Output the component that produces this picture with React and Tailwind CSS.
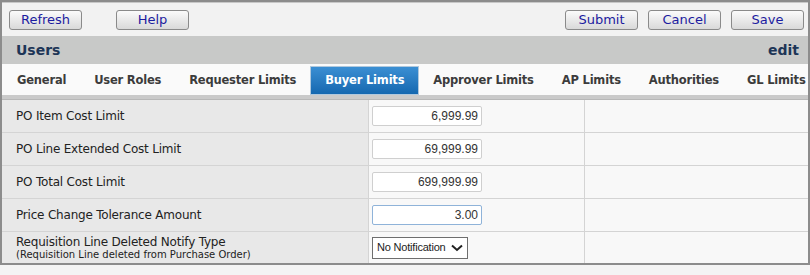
const tabs = [
  'General',
  'User Roles',
  'Requester Limits',
  'Buyer Limits',
  'Approver Limits',
  'AP Limits',
  'Authorities',
  'GL Limits',
];

const rows = [
  { label: 'PO Item Cost Limit', value: '6,999.99' },
  { label: 'PO Line Extended Cost Limit', value: '69,999.99' },
  { label: 'PO Total Cost Limit', value: '699,999.99' },
  { label: 'Price Change Tolerance Amount', value: '3.00', focus: true },
];

function Btn({ children }) {
  return (
    <button className="h-[20px] w-[73px] rounded-[3px] border border-[#8a8a8a] bg-gradient-to-b from-[#fbfbfb] to-[#d9d9d9] text-[13px] leading-none text-[#1c1ca0]">
      {children}
    </button>
  );
}

function NumInput({ value, focus }) {
  return (
    <input
      readOnly
      value={value}
      className={
        'h-[20px] w-[110px] rounded-[2px] border bg-white px-[3px] text-right text-[12px] text-[#333] outline-none [font-family:"Liberation_Sans",Arial,sans-serif] ' +
        (focus ? 'border-[#8fb3d9]' : 'border-[#cfcfcf]')
      }
    />
  );
}

export default function App() {
  return (
    <div className="h-[275px] w-[810px] bg-[#f4f4f4] [font-family:'DejaVu_Sans',sans-serif]">
      <div className="border-x-[2px] border-y-[2px] border-[#8c8c8c] bg-[#f2f2f2]">
        <div className="flex h-[34px] items-center border-t border-[#c8c8c8] pl-[7px] pr-[4px]">
          <div className="flex gap-[34px]">
            <Btn>Refresh</Btn>
            <Btn>Help</Btn>
          </div>
          <div className="ml-auto flex gap-[10px]">
            <Btn>Submit</Btn>
            <Btn>Cancel</Btn>
            <Btn>Save</Btn>
          </div>
        </div>
        <div className="flex h-[28px] items-center justify-between bg-[#c8c9c8] pl-[14px] pr-[9px] text-[14px] font-bold text-[#1d3557]">
          <span>Users</span>
          <span>edit</span>
        </div>
        <div className="flex h-[31px] items-end overflow-hidden whitespace-nowrap bg-[#fafafa] pl-[1px] text-[11.5px] font-bold tracking-[-0.2px]">
          {tabs.map((t) =>
            t === 'Buyer Limits' ? (
              <div
                key={t}
                className="flex h-[29px] shrink-0 items-center border border-[#b0c8dd] bg-gradient-to-b from-[#3b8fd3] to-[#1468b0] px-[14px] text-white"
              >
                {t}
              </div>
            ) : (
              <div key={t} className="flex h-[29px] shrink-0 items-center px-[14px] text-[#3c3c3c]">
                {t}
              </div>
            )
          )}
        </div>
        <div className="h-[4px] bg-[#cacaca]" />
        <div className="border-t border-[#b8b8b8]">
          {rows.map((r) => (
            <div key={r.label} className="grid h-[33px] grid-cols-[366px_216px_1fr] border-b border-[#d4d4d4]">
              <div className="flex items-center bg-[#e8e8e8] pl-[14px] text-[12px] tracking-[-0.2px] text-[#222]">{r.label}</div>
              <div className="flex items-center border-l border-[#d4d4d4] bg-[#f8f8f8] pl-[3px]">
                <NumInput value={r.value} focus={r.focus} />
              </div>
              <div className="border-l border-[#d4d4d4] bg-[#f8f8f8]" />
            </div>
          ))}
          <div className="grid h-[31px] grid-cols-[366px_216px_1fr]">
            <div className="flex flex-col justify-center bg-[#e8e8e8] pl-[14px] text-[#222]">
              <span className="text-[12px] leading-[14px] tracking-[-0.2px]">Requisition Line Deleted Notify Type</span>
              <span className="text-[10px] leading-[12px]">(Requisition Line deleted from Purchase Order)</span>
            </div>
            <div className="flex items-center border-l border-[#d4d4d4] bg-[#f8f8f8] pl-[3px]">
              <div className="flex h-[22px] w-[96px] items-center justify-between whitespace-nowrap border border-[#6e6e6e] bg-white pl-[4px] pr-[4px] text-[11px] tracking-[-0.2px] text-[#222] [font-family:'Liberation_Sans',Arial,sans-serif]">
                <span>No Notification</span>
                <svg width="12" height="8" viewBox="0 0 12 8">
                  <path d="M1 1.5 L6 6 L11 1.5" fill="none" stroke="#222" strokeWidth="2" />
                </svg>
              </div>
            </div>
            <div className="border-l border-[#d4d4d4] bg-[#f8f8f8]" />
          </div>
        </div>
      </div>
    </div>
  );
}
